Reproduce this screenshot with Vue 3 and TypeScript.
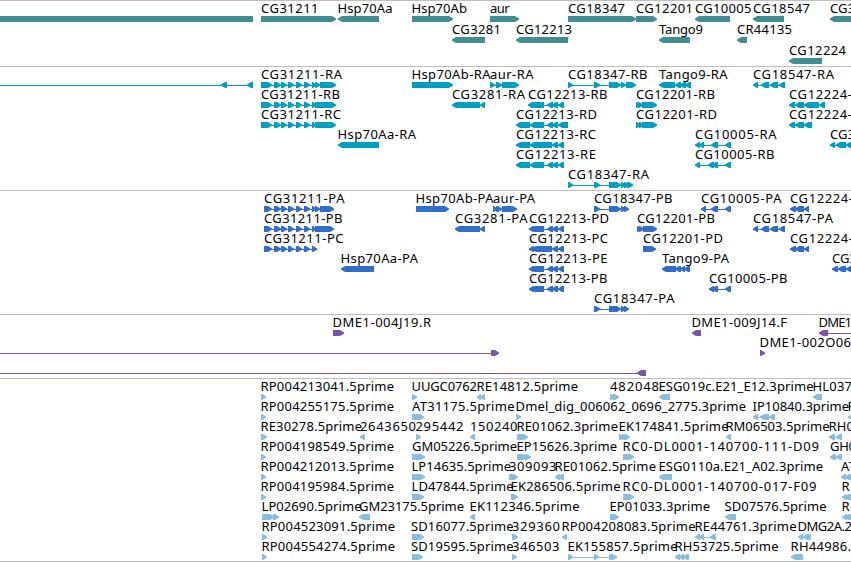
<template>
  <main class="browser">
    <section v-for="track in tracks" :key="track.id" class="track" :class="track.id">
      <svg width="851" :height="track.height" :viewBox="`0 0 851 ${track.height}`">
        <g
          v-for="(item, i) in track.features"
          :key="i"
          :transform="`translate(0 ${item[0] * track.pitch})`"
        >
          <line
            v-if="item[5].length > 1"
            class="intron"
            :x1="item[5][0][0]"
            :x2="item[5][item[5].length - 1][1]"
            y1="18.5"
            y2="18.5"
          />
          <polygon
            v-for="(exon, n) in item[5]"
            :key="n"
            class="exon"
            :points="arrow(exon, item[4])"
          />
          <text v-if="item[1]" :x="item[2]" y="12" :textLength="item[3] - item[2]">{{ item[1] }}</text>
        </g>
      </svg>
    </section>
  </main>
</template>

<script setup lang="ts">
type Span = [number, number];
type Strand = ">" | "<";
// row, label, label start, label end, strand, exons
type Feature = [number, string, number, number, Strand, Span[]];

interface Track {
  id: string;
  height: number;
  pitch: number;
  features: Feature[];
}

const HEAD = 5;

function arrow([start, end]: Span, strand: Strand) {
  const head = Math.min(HEAD, end - start);
  if (strand === ">") {
    const neck = end - head;
    return `${start},15 ${neck + 1},15 ${end},17.6 ${end},18.8 ${neck + 1},21 ${start},21`;
  }
  const neck = start + head;
  return `${end},15 ${neck - 1},15 ${start},17.6 ${start},18.8 ${neck - 1},21 ${end},21`;
}

const cg31211: Span[] = [[274, 281], [281, 287], [288, 294], [296, 302], [304, 310]];
const cg12213: Span[] = [[531, 544], [547, 553], [552, 558], [558, 564]];
const cg18347: Span[] = [[594, 600], [609, 616], [613, 621], [621, 626]];
const cg18547: Span[] = [[753, 758], [761, 769], [770, 778], [779, 785]];

const genes: Feature[] = [
  [0, "", 0, 0, "<", [[-10, 253]]],
  [0, "CG31211", 261, 318.5, ">", [[261, 336]]],
  [0, "Hsp70Aa", 337.5, 392.5, "<", [[338, 379]]],
  [0, "Hsp70Ab", 411.5, 467, ">", [[412, 453]]],
  [0, "aur", 490, 509.5, ">", [[490, 519]]],
  [0, "CG18347", 568, 625, ">", [[568, 636]]],
  [0, "CG12201", 636, 693, ">", [[636, 657]]],
  [0, "CG10005", 695, 751.5, "<", [[695, 730]]],
  [0, "CG18547", 753, 810, "<", [[753, 784]]],
  [0, "CG3", 830, 855, "<", [[830, 870]]],
  [1, "CG3281", 452, 501, "<", [[452, 485]]],
  [1, "CG12213", 516, 572, "<", [[516, 568]]],
  [1, "Tango9", 659, 703, "<", [[659, 690]]],
  [1, "CR44135", 737, 792, "<", [[737, 747]]],
  [2, "CG12224", 789, 846, "<", [[789, 822]]],
];

const transcripts: Feature[] = [
  [0, "", 0, 0, "<", [[-10, -5], [221, 227], [247, 253]]],
  [0, "CG31211-RA", 261, 342, ">", [[261, 272], ...cg31211, [312, 316], [315, 320], [320, 336]]],
  [0, "Hsp70Ab-RA", 411.5, 490.5, ">", [[412, 453]]],
  [0, "aur-RA", 490, 533.5, ">", [[490, 495], [496, 502], [502, 519]]],
  [0, "CG18347-RB", 568, 647.5, ">", [[568, 573], ...cg18347, [626, 636]]],
  [0, "Tango9-RA", 659, 727.5, "<", [[659, 675], [675, 681], [680, 686], [685, 691]]],
  [0, "CG18547-RA", 753, 834, "<", cg18547],
  [1, "CG31211-RB", 261, 340, ">", [[261, 272], ...cg31211, [312, 316], [315, 336]]],
  [1, "CG3281-RA", 452, 525, "<", [[452, 480], [480, 485]]],
  [1, "CG12213-RB", 528, 607.5, "<", [[528, 534], ...cg12213]],
  [1, "CG12201-RB", 636, 715, ">", [[636, 639], [638, 643], [642, 657]]],
  [1, "CG12224-", 789, 852, "<", [[789, 795], [795, 804], [804, 819], [819, 825]]],
  [2, "CG31211-RC", 261, 341, ">", [[261, 272], ...cg31211, [312, 316], [315, 336]]],
  [2, "CG12213-RD", 516, 597, "<", [[516, 530], [530, 544], [547, 553], [552, 558], [558, 568]]],
  [2, "CG12201-RD", 636, 717, ">", [[636, 640], [639, 644], [642, 657]]],
  [2, "CG12224-", 789, 852, "<", [[789, 795], [795, 804], [804, 812]]],
  [3, "Hsp70Aa-RA", 337.5, 416, "<", [[338, 379]]],
  [3, "CG12213-RC", 516, 596, "<", [[516, 530], [530, 552], [552, 558], [558, 564]]],
  [3, "CG10005-RA", 695, 776.5, "<", [[695, 700], [699, 704], [711, 718], [725, 731]]],
  [3, "CG3", 830, 855, "<", [[830, 835], [836, 846], [846, 860]]],
  [4, "CG12213-RE", 516, 596, "<", [[516, 530], [530, 544], [547, 553], [552, 558], [558, 564]]],
  [4, "CG10005-RB", 695, 774.5, "<", [[695, 700], [708, 714], [712, 718], [725, 731]]],
  [5, "CG18347-RA", 568, 649, ">", [[568, 573], ...cg18347, [624, 629], [627, 633]]],
];

const proteins: Feature[] = [
  [0, "CG31211-PA", 264, 344.5, ">", [[264, 272], ...cg31211, [312, 316], [315, 320], [320, 334]]],
  [0, "Hsp70Ab-PA", 415.5, 493.5, ">", [[416, 449]]],
  [0, "aur-PA", 493, 535, ">", [[493, 497], [496, 502], [502, 517]]],
  [0, "CG18347-PB", 594, 672.5, ">", [...cg18347, [624, 629]]],
  [0, "CG10005-PA", 701, 781.5, "<", [[701, 706], [711, 718], [725, 731]]],
  [0, "CG12224-", 790, 853, "<", [[790, 796], [795, 804], [804, 809]]],
  [1, "CG31211-PB", 264, 342.5, ">", [[264, 272], ...cg31211, [312, 316], [315, 334]]],
  [1, "CG3281-PA", 455, 527.5, "<", [[455, 480], [480, 485]]],
  [1, "CG12213-PD", 529, 609, "<", [[529, 534], ...cg12213]],
  [1, "CG12201-PB", 637, 715, ">", [[637, 640], [639, 644], [643, 657]]],
  [1, "CG18547-PA", 753, 833, "<", cg18547],
  [2, "CG31211-PC", 264, 343.5, ">", [[264, 272], ...cg31211, [312, 317]]],
  [2, "CG12213-PC", 529, 608, "<", [[529, 534], [532, 552], [552, 558], [558, 564]]],
  [2, "CG12201-PD", 643, 723, ">", [[643, 656]]],
  [2, "CG12224-", 790, 853, "<", [[790, 796], [795, 804], [804, 809]]],
  [3, "Hsp70Aa-PA", 340.5, 418, "<", [[341, 374]]],
  [3, "CG12213-PE", 529, 607.5, "<", [[529, 534], ...cg12213]],
  [3, "Tango9-PA", 662, 729, "<", [[662, 676], [675, 681], [680, 685], [684, 690]]],
  [3, "CG3", 832, 857, "<", [[832, 838], [838, 846], [846, 860]]],
  [4, "CG12213-PB", 529, 607.5, "<", [[529, 534], ...cg12213]],
  [4, "CG10005-PB", 709, 787.5, "<", [[709, 714], [712, 718], [725, 731]]],
  [5, "CG18347-PA", 594, 674.5, ">", [...cg18347, [624, 629]]],
];

const clones: Feature[] = [
  [0, "DME1-004J19.R", 332.5, 431, ">", [[333, 344]]],
  [0, "DME1-009J14.F", 691.5, 787, "<", [[692, 701]]],
  [0, "DME1", 818.5, 852, "<", [[819, 828], [860, 865]]],
  [1, "", 0, 0, ">", [[-10, -5], [491, 499]]],
  [1, "DME1-002O06", 759.5, 851, ">", [[760, 765]]],
  [2, "", 0, 0, "<", [[-10, -5], [637, 646]]],
];

const ests: Feature[] = [
  [0, "RP004213041.5prime", 260.5, 394, ">", [[261, 266]]],
  [0, "UUGC0762", 411.5, 477, ">", [[412, 417]]],
  [0, "RE14812.5prime", 476.5, 578, "<", [[477, 481], [480, 485]]],
  [0, "482048", 610, 659, ">", [[610, 615], [613, 619]]],
  [0, "ESG019c.E21_E12.3prime", 658.5, 813.5, "<", [[659, 670]]],
  [0, "HL037", 812.5, 852, "<", [[813, 822]]],
  [1, "RP004255175.5prime", 260.5, 394, ">", [[261, 266]]],
  [1, "AT31175.5prime", 412, 514.5, ">", [[412, 424]]],
  [1, "Dmel_dig_006062_0696_2775.3prime", 515.5, 746, ">", [[516, 521]]],
  [1, "IP10840.3prime", 752.5, 849, "<", [[753, 758], [760, 769], [769, 775]]],
  [1, "R", 847.5, 855, "<", [[848, 858]]],
  [2, "RE30278.5prime", 260.5, 362, ">", [[261, 267]]],
  [2, "2643650", 360, 416, "<", [[360, 365]]],
  [2, "295442", 415.5, 463.5, ">", [[416, 421]]],
  [2, "150240", 470, 517.5, "<", [[470, 475]]],
  [2, "RE01062.3prime", 516.5, 618, ">", [[517, 528]]],
  [2, "EK174841.5prime", 618.5, 728.5, ">", [[619, 624], [622, 627], [624, 630]]],
  [2, "RM06503.5prime", 725.5, 829.5, "<", [[726, 731]]],
  [2, "RH0", 828.5, 854, "<", [[829, 835], [836, 842]]],
  [3, "RP004198549.5prime", 260.5, 394, ">", [[261, 266]]],
  [3, "GM05226.5prime", 412, 517, ">", [[412, 425]]],
  [3, "EP15626.3prime", 516.5, 617, ">", [[517, 527], [525, 531]]],
  [3, "RC0-DL0001-140700-111-D09", 622.5, 819, ">", [[623, 634]]],
  [3, "GH0", 830, 856, "<", [[830, 836], [836, 842]]],
  [4, "RP004212013.5prime", 260.5, 394, ">", [[261, 266]]],
  [4, "LP14635.5prime", 411.5, 511, ">", [[412, 425]]],
  [4, "309093", 509, 556.5, ">", [[509, 518]]],
  [4, "RE01062.5prime", 554.5, 656, "<", [[555, 560], [558, 564]]],
  [4, "ESG0110a.E21_A02.3prime", 658.5, 823, "<", [[659, 672]]],
  [4, "AT", 841, 856, "<", [[841, 846], [845, 860]]],
  [5, "RP004195984.5prime", 260.5, 394, ">", [[261, 266]]],
  [5, "LD47844.5prime", 411.5, 513.5, ">", [[412, 424]]],
  [5, "EK286506.5prime", 510.5, 620.5, ">", [[511, 518]]],
  [5, "RC0-DL0001-140700-017-F09", 622.5, 816.5, ">", [[623, 634]]],
  [5, "R", 841.5, 850, "<", [[842, 847], [845, 860]]],
  [6, "LP02690.5prime", 261.5, 361.5, ">", [[262, 274], [273, 279]]],
  [6, "GM23175.5prime", 359, 464, "<", [[359, 370]]],
  [6, "EK112346.5prime", 469.5, 579.5, "<", [[470, 475]]],
  [6, "EP01033.3prime", 609.5, 710, ">", [[610, 619]]],
  [6, "SD07576.5prime", 724.5, 826.5, "<", [[725, 736]]],
  [6, "R", 841.5, 850, "<", [[842, 847], [845, 860]]],
  [7, "RP004523091.5prime", 261.5, 395, ">", [[262, 267]]],
  [7, "SD16077.5prime", 411, 513.5, ">", [[412, 424]]],
  [7, "329360", 512, 560, ">", [[512, 518]]],
  [7, "RP004208083.5prime", 561.5, 695.5, "<", [[562, 567]]],
  [7, "RE44761.3prime", 694.5, 796.5, "<", [[695, 700], [699, 704], [710, 716]]],
  [7, "DMG2A.2", 797.5, 852, "<", [[798, 803], [803, 811]]],
  [8, "RP004554274.5prime", 261.5, 395, ">", [[262, 267]]],
  [8, "SD19595.5prime", 411, 513.5, ">", [[412, 423]]],
  [8, "346503", 512, 559.5, ">", [[512, 517]]],
  [8, "EK155857.5prime", 567.5, 677.5, ">", [[568, 573], [594, 599], [609, 613], [611, 617]]],
  [8, "RH53725.5prime", 674.5, 778.5, "<", [[675, 680], [679, 684], [683, 689]]],
  [8, "RH44986.", 790.5, 851, "<", [[791, 803]]],
];

const tracks: Track[] = [
  { id: "genes", height: 65, pitch: 21, features: genes },
  { id: "transcripts", height: 123, pitch: 20, features: transcripts },
  { id: "proteins", height: 123, pitch: 20, features: proteins },
  { id: "clones", height: 63, pitch: 20, features: clones },
  { id: "ests", height: 182, pitch: 20, features: ests },
];
</script>

<style>
body {
  margin: 0;
  background: #ffffff;
}
</style>

<style scoped>
.browser {
  width: 851px;
  height: 562px;
  box-sizing: border-box;
  overflow: hidden;
  border-bottom: 1px solid #bebebe;
  background: #ffffff;
}

.track {
  border-top: 1px solid #bebebe;
}

.track svg {
  display: block;
  overflow: hidden;
}

.genes {
  color: #408e91;
}

.transcripts {
  color: #009fc0;
}

.proteins {
  color: #306ecb;
}

.clones {
  color: #7457a5;
}

.ests {
  color: #88bddd;
}

.exon {
  fill: currentColor;
}

.intron {
  stroke: currentColor;
  stroke-width: 1;
  shape-rendering: crispEdges;
}

text {
  fill: #000000;
  font-family: "Noto Sans", "Open Sans", sans-serif;
  font-size: 13px;
}
</style>
